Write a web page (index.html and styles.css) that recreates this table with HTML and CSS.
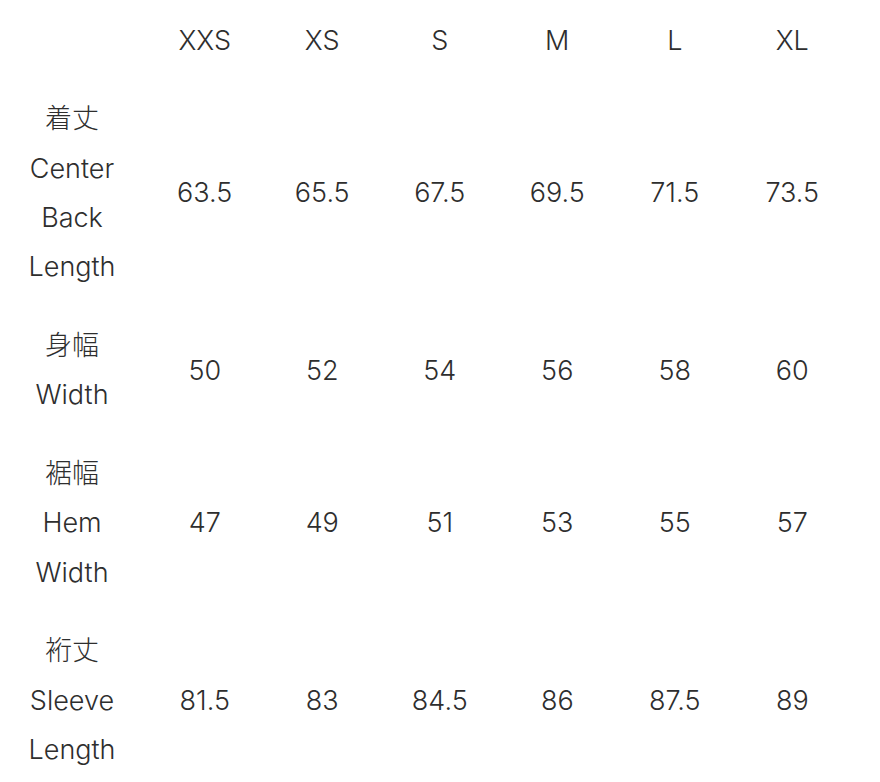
FILE: index.html
```html
<!DOCTYPE html>
<html lang="ja">
<head>
<meta charset="utf-8">
<title>Size chart</title>
<link rel="stylesheet" href="styles.css">
</head>
<body>
<table class="size-table">
  <thead>
    <tr>
      <th class="label"></th>
      <th>XXS</th><th>XS</th><th>S</th><th>M</th><th>L</th><th>XL</th>
    </tr>
  </thead>
  <tbody>
    <tr>
      <th class="label">着丈<br>Center<br>Back<br>Length</th>
      <td>63.5</td><td>65.5</td><td>67.5</td><td>69.5</td><td>71.5</td><td>73.5</td>
    </tr>
    <tr>
      <th class="label">身幅<br>Width</th>
      <td>50</td><td>52</td><td>54</td><td>56</td><td>58</td><td>60</td>
    </tr>
    <tr>
      <th class="label">裾幅<br>Hem<br>Width</th>
      <td>47</td><td>49</td><td>51</td><td>53</td><td>55</td><td>57</td>
    </tr>
    <tr>
      <th class="label">裄丈<br>Sleeve<br>Length</th>
      <td>81.5</td><td>83</td><td>84.5</td><td>86</td><td>87.5</td><td>89</td>
    </tr>
  </tbody>
</table>
</body>
</html>
```

FILE: styles.css
```css
html, body {
  margin: 0;
  padding: 0;
  background: #ffffff;
}

body {
  font-family: "Inter", "Noto Sans CJK JP", sans-serif;
  font-size: 27px;
  font-weight: 300;
  line-height: 49.4px;
  color: #2e2e2e;
}

.size-table {
  border-collapse: collapse;
  margin-left: 14px;
  margin-top: 1px;
  table-layout: fixed;
}

.size-table th,
.size-table td {
  padding: 14.6px 0;
  text-align: center;
  vertical-align: middle;
  font-weight: 300;
  width: 117.5px;
}

.size-table th.label {
  width: 116px;
  padding-right: 16px;
}
```
